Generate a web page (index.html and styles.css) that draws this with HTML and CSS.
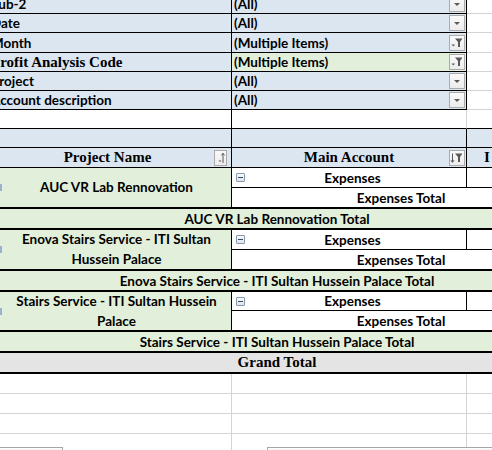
FILE: index.html
```html
<!DOCTYPE html>
<html>
<head>
<meta charset="utf-8">
<title>Pivot</title>
<link rel="stylesheet" href="styles.css">
</head>
<body>
<div class="sheet">
  <div class="row h20">
    <div class="c fl">Sub-2</div>
    <div class="c fv"><span class="val">(All)</span><span class="btn"><svg width="14" height="14" viewBox="0 0 14 14"><path d="M4 6h6l-3 3z" fill="#595959"/></svg></span></div>
    <div class="gx"></div>
  </div>
  <div class="row h19">
    <div class="c fl">Date</div>
    <div class="c fv"><span class="val">(All)</span><span class="btn"><svg width="14" height="14" viewBox="0 0 14 14"><path d="M4 6h6l-3 3z" fill="#595959"/></svg></span></div>
    <div class="gx"></div>
  </div>
  <div class="row h20">
    <div class="c fl">Month</div>
    <div class="c fv"><span class="val">(Multiple Items)</span><span class="btn"><svg width="14" height="14" viewBox="0 0 14 14"><path d="M5 2.5h7.5L10 6v5H8V6z" fill="#595959"/><path d="M1.5 8.5h3.5L3.25 10.5z" fill="#595959"/></svg></span></div>
    <div class="gx"></div>
  </div>
  <div class="row h19">
    <div class="c fl serif">Profit Analysis Code</div>
    <div class="c fv green"><span class="val">(Multiple Items)</span><span class="btn"><svg width="14" height="14" viewBox="0 0 14 14"><path d="M5 2.5h7.5L10 6v5H8V6z" fill="#595959"/><path d="M1.5 8.5h3.5L3.25 10.5z" fill="#595959"/></svg></span></div>
    <div class="gx"></div>
  </div>
  <div class="row h19">
    <div class="c fl">Project</div>
    <div class="c fv"><span class="val">(All)</span><span class="btn"><svg width="14" height="14" viewBox="0 0 14 14"><path d="M4 6h6l-3 3z" fill="#595959"/></svg></span></div>
    <div class="gx"></div>
  </div>
  <div class="row h19">
    <div class="c fl">Account description</div>
    <div class="c fv"><span class="val">(All)</span><span class="btn"><svg width="14" height="14" viewBox="0 0 14 14"><path d="M4 6h6l-3 3z" fill="#595959"/></svg></span></div>
    <div class="gx"></div>
  </div>

  <div class="row h19 blankrow">
    <div class="c ba"></div>
    <div class="c bb"></div>
    <div class="bc"></div>
  </div>

  <div class="row h19 bluerow">
    <div class="c"></div>
    <div class="c"></div>
    <div class="cc"></div>
  </div>

  <div class="row h20 bluerow">
    <div class="c hcell"><span class="htext">Project Name</span><span class="btn hbtn narrow"><svg width="11" height="14" viewBox="0 0 11 14"><path d="M3.5 9.5h3l-1.5 1.6z" fill="#595959"/><path d="M8 12V2.5" stroke="#595959" stroke-width="1"/><path d="M6.4 4.4L8 2.2l1.6 2.2" fill="none" stroke="#595959" stroke-width="1"/></svg></span></div>
    <div class="c hcell"><span class="htext">Main Account</span><span class="btn hbtn"><svg width="14" height="14" viewBox="0 0 14 14"><path d="M2.5 2.5v8.5" stroke="#595959" stroke-width="1"/><path d="M1 9.2l1.5 2.2 1.5-2.2" fill="none" stroke="#595959" stroke-width="1"/><path d="M5 2.5h7.5L10 6v5H8V6z" fill="#595959"/></svg></span></div>
    <div class="cc"><span class="ctext">I</span></div>
  </div>

  <div class="group g1">
    <div class="c pname"><span class="mark"></span><span class="ptext">AUC VR Lab Rennovation</span></div>
    <div class="c exp"><span class="minus"></span><span class="etext">Expenses</span></div>
    <div class="expc"></div>
    <div class="expt">Expenses Total</div>
  </div>
  <div class="total">AUC VR Lab Rennovation Total</div>

  <div class="group g2">
    <div class="c pname"><span class="mark"></span><span class="ptext">Enova Stairs Service - ITI Sultan<br>Hussein Palace</span></div>
    <div class="c exp"><span class="minus"></span><span class="etext">Expenses</span></div>
    <div class="expc"></div>
    <div class="expt">Expenses Total</div>
  </div>
  <div class="total">Enova Stairs Service - ITI Sultan Hussein Palace Total</div>

  <div class="group g3">
    <div class="c pname"><span class="mark"></span><span class="ptext">Stairs Service - ITI Sultan Hussein<br>Palace</span></div>
    <div class="c exp"><span class="minus"></span><span class="etext">Expenses</span></div>
    <div class="expc"></div>
    <div class="expt">Expenses Total</div>
  </div>
  <div class="total">Stairs Service - ITI Sultan Hussein Palace Total</div>

  <div class="grand">Grand Total</div>

  <div class="row h20 grid"><div class="gc"></div><div class="gc"></div><div class="gd"></div></div>
  <div class="row h20 grid"><div class="gc"></div><div class="gc"></div><div class="gd"></div></div>
  <div class="row h20 grid"><div class="gc"></div><div class="gc"></div><div class="gd"></div></div>
  <div class="row h20 grid last"><div class="gc"></div><div class="gc"></div><div class="gd"></div></div>
</div>
<div class="shape shape-left"></div>
<div class="shape shape-right"></div>
</body>
</html>
```

FILE: styles.css
```css
* { box-sizing: border-box; }
html, body { margin: 0; padding: 0; background: #fff; }
body {
  width: 492px;
  height: 450px;
  overflow: hidden;
  position: relative;
  font-family: Lato, "Liberation Sans", sans-serif;
  font-weight: 700;
  font-size: 13.5px;
  color: #000;
}
.sheet {
  margin-left: -16px;
  margin-top: -6px;
  width: 586px;
}
.row {
  display: grid;
  grid-template-columns: 248px 235px 103px;
}
.h19 { height: 19px; }
.h20 { height: 20px; }
.c {
  border-right: 1px solid #000;
  display: flex;
  align-items: center;
  overflow: hidden;
  white-space: nowrap;
}
.fl {
  background: #dce6f1;
  border-bottom: 1px solid #000;
  padding-left: 7px;
}
.fv {
  background: #dce6f1;
  border-bottom: 1px solid #000;
  padding-left: 2px;
  justify-content: space-between;
}
.fv.green { background: #e2efda; }
.serif {
  font-family: "Liberation Serif", serif;
  font-size: 15px;
  font-weight: 700;
}
.gx { border-bottom: 1px solid #d4d4d4; }
.btn {
  width: 16px;
  height: 16px;
  margin-right: 1px;
  border: 1px solid #ababab;
  background: linear-gradient(#fafafa, #ececec);
  display: flex;
  flex: none;
}
.blankrow .ba { border-bottom: 1px solid #000; }
.blankrow .bb { border-right-color: #d4d4d4; border-bottom: 1px solid #000; }
.blankrow .bc { border-bottom: 1px solid #000; }
.bluerow { background: #dce6f1; border-bottom: 1px solid #000; }
.bluerow .c { border-bottom: none; }
.hcell {
  display: grid;
  align-items: center;
}
.hcell > * { grid-area: 1 / 1; }
.htext {
  justify-self: center;
  font-family: "Liberation Serif", serif;
  font-size: 15px;
  font-weight: 700;
}
.hbtn { justify-self: end; }
.hbtn.narrow { width: 13px; margin-right: 4px; }
.cc { display: flex; align-items: center; overflow: hidden; }
.ctext {
  padding-left: 17px;
  font-family: "Liberation Serif", serif;
  font-size: 15px;
  font-weight: 700;
}
.group {
  display: grid;
  grid-template-columns: 248px 235px 103px;
  grid-template-rows: 20px 19px;
}
.g3 { grid-template-rows: 19px 19px; }
.pname {
  grid-row: span 2;
  background: #e2efda;
  white-space: normal;
  padding-left: 16px;
}
.mark {
  width: 2px;
  height: 7px;
  background: #9bb2cf;
  flex: none;
}
.ptext {
  flex: 1;
  text-align: center;
  line-height: 20px;
  padding-bottom: 1px;
}
.exp {
  background: #fff;
  border-bottom: 1px solid #000;
  padding-left: 4px;
}
.minus {
  width: 9px;
  height: 9px;
  flex: none;
  border: 1px solid #8a98ad;
  border-radius: 1px;
  background: linear-gradient(#f7f9fb, #dfe5ee);
  display: flex;
  align-items: center;
  justify-content: center;
}
.minus::after {
  content: "";
  width: 5px;
  height: 1px;
  background: #3c4a5e;
}
.etext { flex: 1; text-align: center; padding-right: 6px; }
.expc { border-bottom: 1px solid #000; background: #fff; }
.expt {
  grid-column: 2 / span 2;
  display: flex;
  align-items: center;
  justify-content: center;
  background: #fff;
}
.total {
  height: 23px;
  border-top: 2px solid #000;
  border-bottom: 2px solid #000;
  background: #e2efda;
  display: flex;
  align-items: center;
  justify-content: center;
  white-space: nowrap;
}
.total + .total, .total + .grand { border-top: none; }
.grand {
  height: 21px;
  border-bottom: 2px solid #000;
  background: #e4e4e4;
  display: flex;
  align-items: center;
  justify-content: center;
  font-family: "Liberation Serif", serif;
  font-size: 15px;
  font-weight: 700;
}
.grid .gc { border-right: 1px solid #d4d4d4; border-bottom: 1px solid #d4d4d4; }
.grid .gd { border-bottom: 1px solid #d4d4d4; }
.grid.last .gc, .grid.last .gd { border-bottom: none; }
.shape {
  position: absolute;
  top: 447px;
  height: 12px;
  border: 1px solid #a6a6a6;
  background: #f5f5f5;
  box-shadow: inset 1px 1px 0 #fff;
}
.shape-left { left: -4px; width: 67px; }
.shape-right { left: 267px; width: 240px; }
```
